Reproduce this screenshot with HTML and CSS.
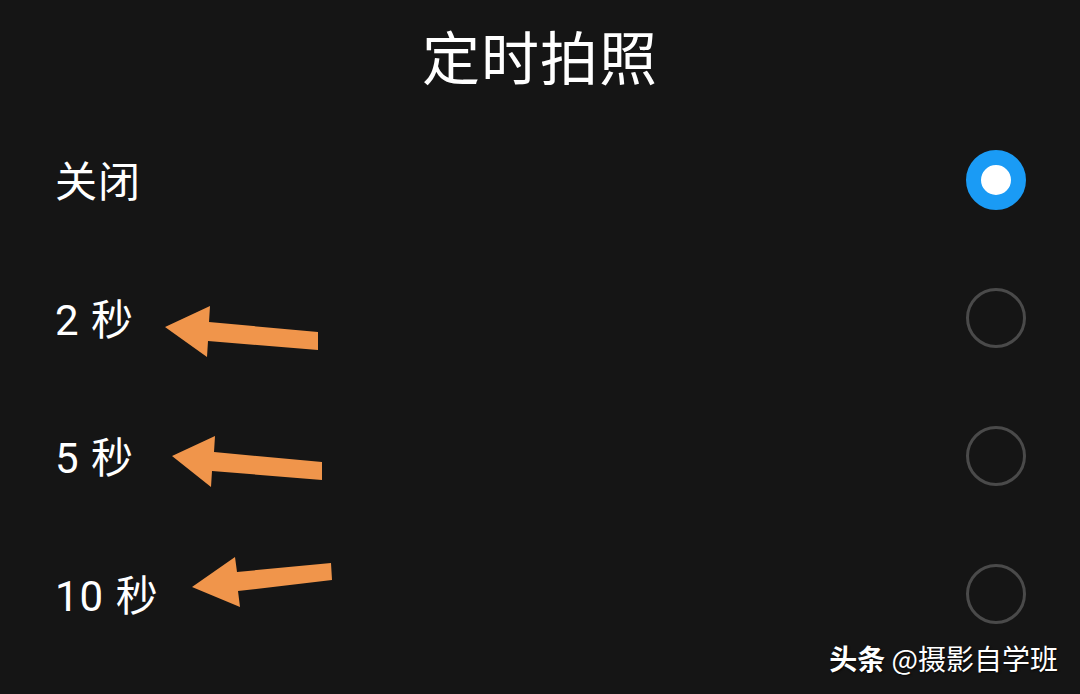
FILE: index.html
```html
<!DOCTYPE html>
<html lang="zh-CN">
<head>
  <meta charset="UTF-8" />
  <meta name="viewport" content="width=device-width, initial-scale=1.0"/>
  <title>定时拍照</title>
  <link rel="stylesheet" href="styles.css">
</head>
<body>
  <div class="screen">
    <h1 class="title">定时拍照</h1>

    <ul class="options">
      <li class="option">
        <span class="label">关闭</span>
        <span class="radio checked"></span>
      </li>
      <li class="option">
        <span class="label">2 秒</span>
        <span class="radio"></span>
      </li>
      <li class="option">
        <span class="label">5 秒</span>
        <span class="radio"></span>
      </li>
      <li class="option">
        <span class="label">10 秒</span>
        <span class="radio"></span>
      </li>
    </ul>

    <!-- hand-drawn arrows pointing at the timer values -->
    <svg class="arrows" viewBox="0 0 1080 694" width="1080" height="694">
      <polygon points="165,327 210,306 209,322 318,332 318,350 208,341 207,357" />
      <polygon points="172,456 215,436 214,452 322,462 322,480 212,471 211,487" />
      <polygon points="192,587 235,557 237,572 331,563 332,580 238,591 240,607" />
    </svg>

    <div class="credit"><b>头条</b> @摄影自学班</div>
  </div>
</body>
</html>
```

FILE: styles.css
```css
html, body {
  margin: 0;
  padding: 0;
}
body {
  background: #151515;
  color: #fff;
  font-family: Roboto, "Noto Sans CJK SC", sans-serif;
}
.screen {
  position: relative;
  width: 1080px;
  height: 694px;
  overflow: hidden;
}
.title {
  margin: 0;
  height: 111px;
  line-height: 120px;
  font-size: 58px;
  font-weight: 400;
  text-align: center;
  letter-spacing: 1px;
}
.options {
  list-style: none;
  margin: 0;
  padding: 0 54px 0 55px;
}
.option {
  display: flex;
  align-items: center;
  justify-content: space-between;
  height: 138px;
}
.label {
  font-size: 42px;
  letter-spacing: 1px;
  margin-top: -3px;
}
.radio {
  box-sizing: border-box;
  width: 60px;
  height: 60px;
  border-radius: 50%;
  border: 3px solid #4a4a4a;
}
.radio.checked {
  border: 15px solid #1a9bf5;
  background: #fff;
}
.arrows {
  position: absolute;
  left: 0;
  top: 0;
  fill: #f0954b;
}
.credit {
  position: absolute;
  right: 22px;
  bottom: 18px;
  font-family: "Noto Sans CJK SC", sans-serif;
  font-size: 28px;
  line-height: 1.2;
  color: #fff;
  text-shadow: 1px 1px 2px rgba(0,0,0,0.8);
}
.credit b {
  font-weight: 700;
}
```
